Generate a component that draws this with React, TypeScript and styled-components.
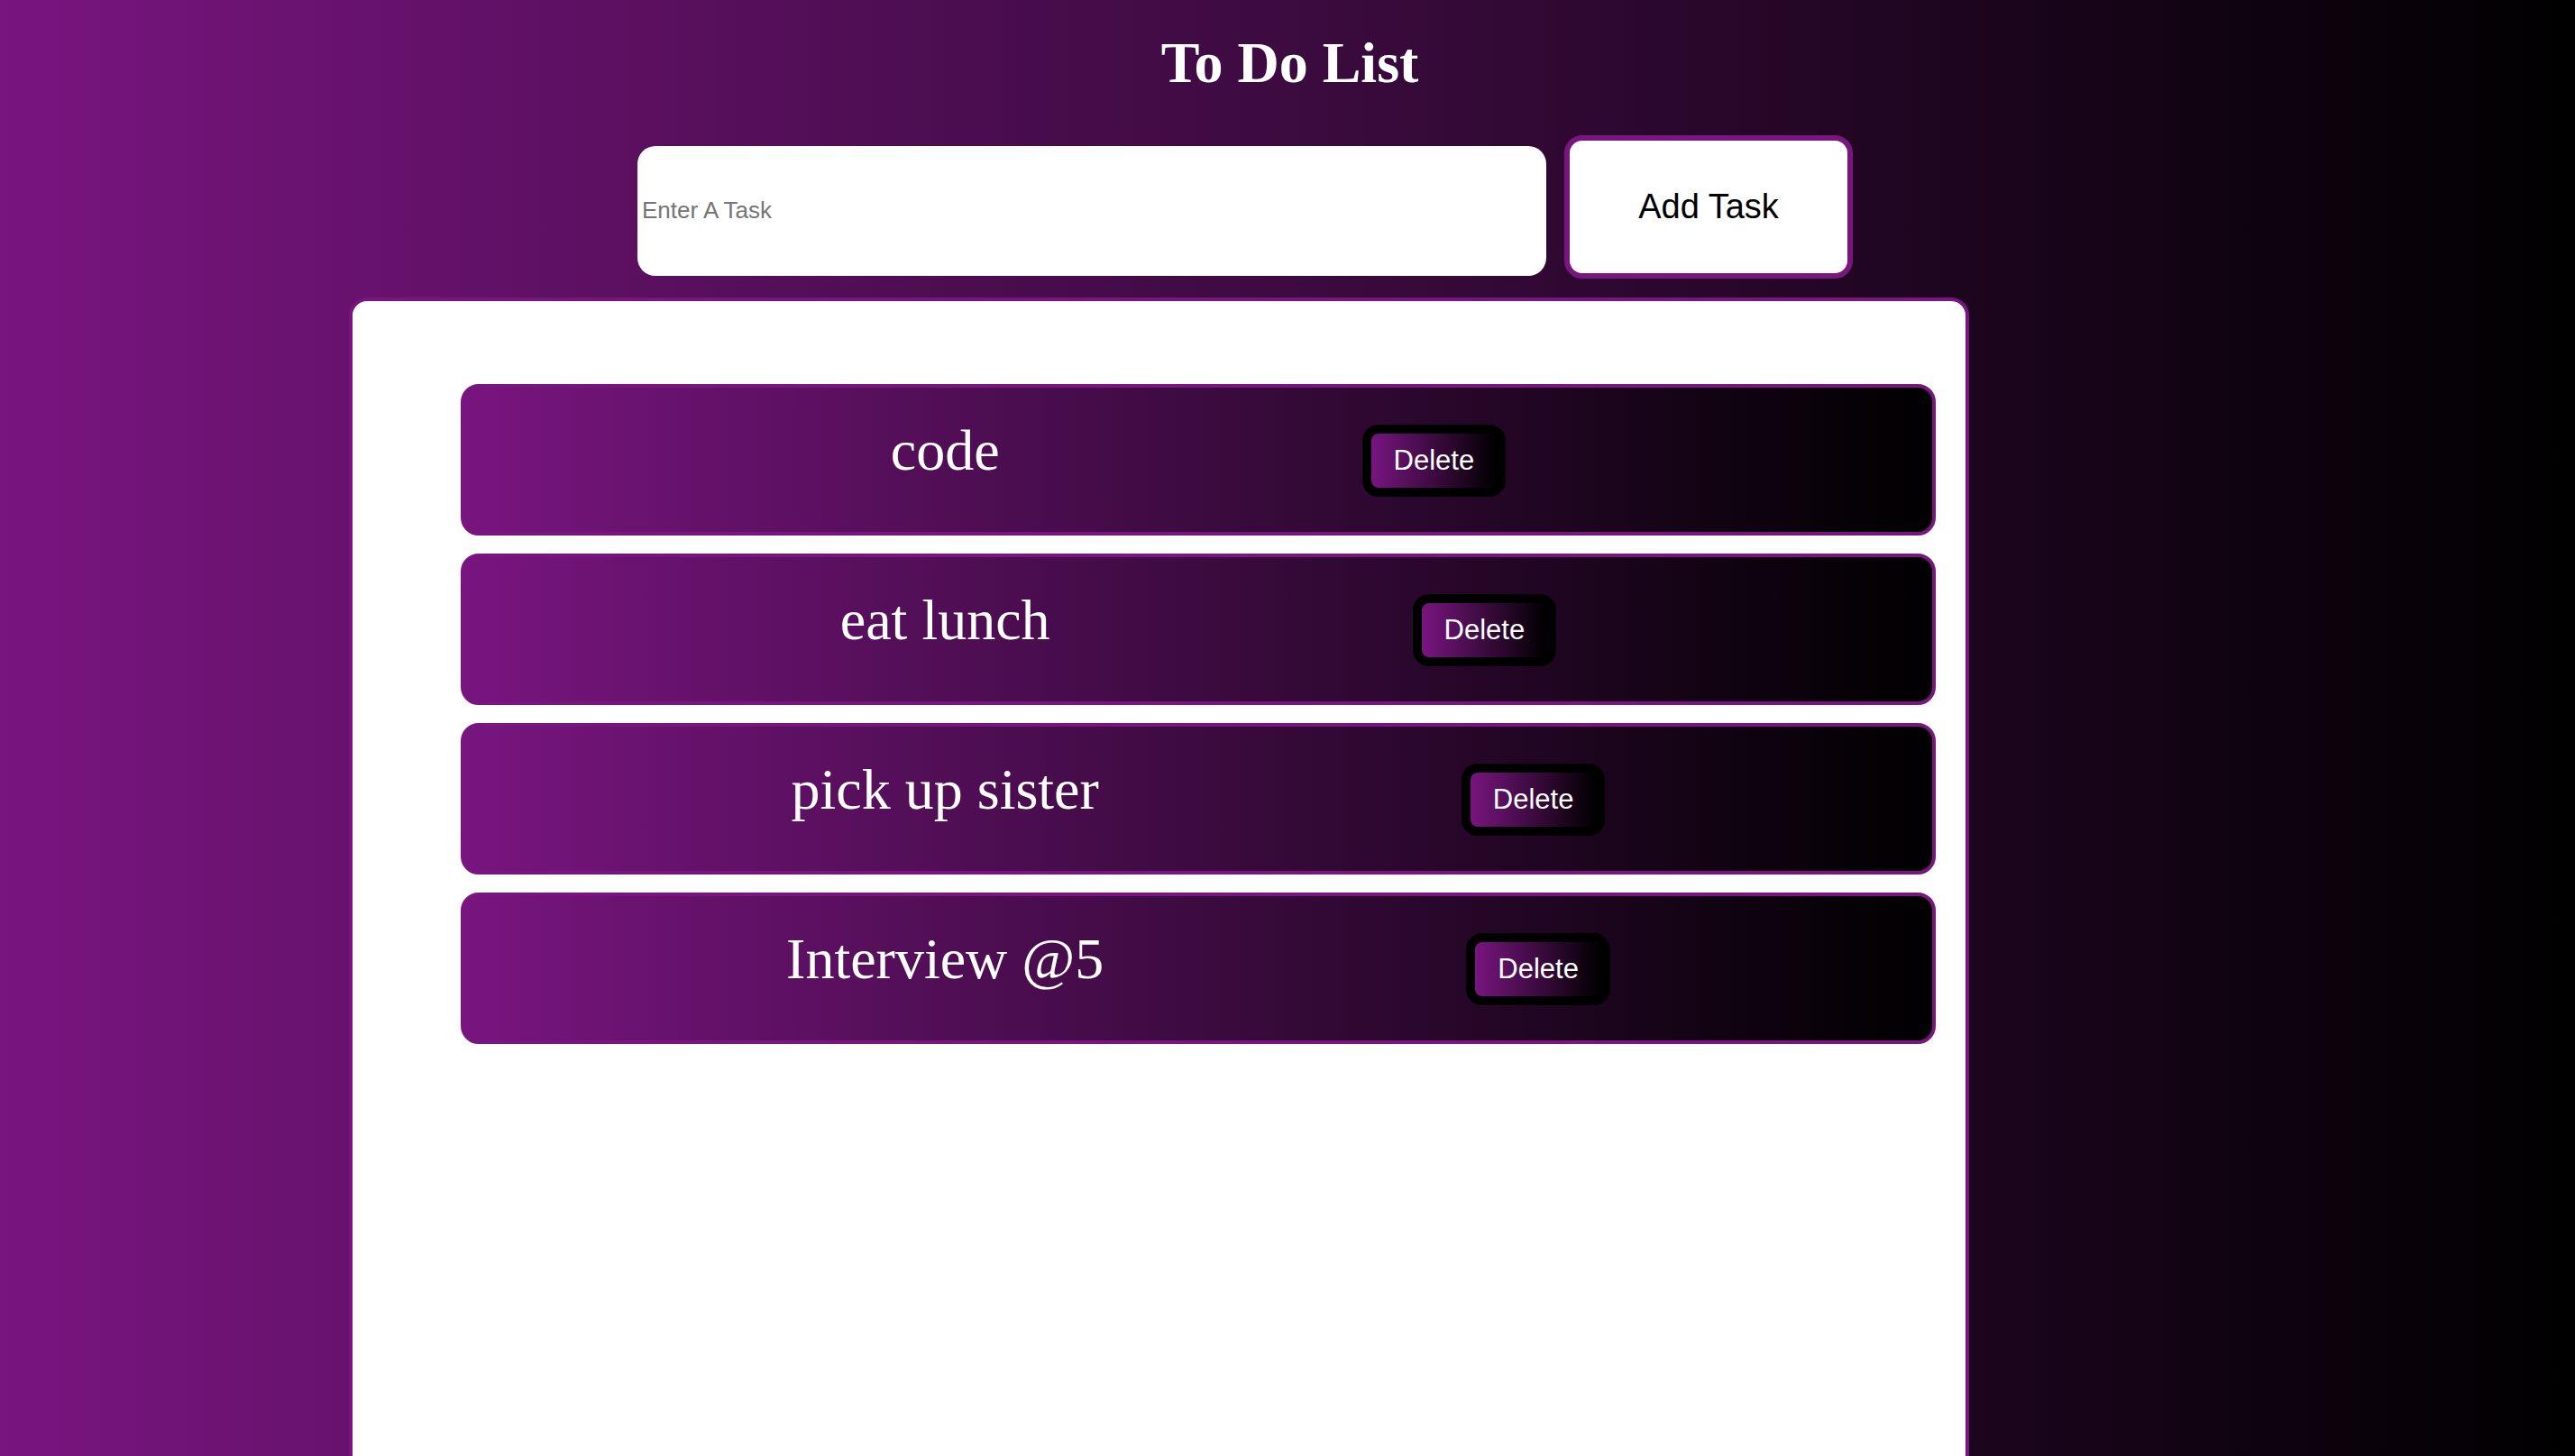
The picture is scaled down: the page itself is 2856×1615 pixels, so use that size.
import React, { useState } from "react";
import styled, { createGlobalStyle } from "styled-components";

const PURPLE = "#78157f";

const GlobalStyle = createGlobalStyle`
  html, body {
    margin: 0;
    padding: 0;
    height: 100%;
    overflow: hidden;
  }
  body {
    background: #000;
  }
  #root {
    height: 100%;
  }
`;

const Page = styled.div`
  height: 100vh;
  overflow: hidden;
  background: linear-gradient(to right, ${PURPLE}, #000);
  display: flex;
  flex-direction: column;
`;

const Title = styled.h1`
  margin: 33px 0 43px;
  padding-left: 5px;
  text-align: center;
  color: #fff;
  font-family: "Liberation Serif", "Times New Roman", serif;
  font-weight: bold;
  font-size: 64px;
  line-height: normal;
`;

const Form = styled.form`
  display: flex;
  align-items: baseline;
  justify-content: center;
  gap: 20px;
  padding-right: 94px;
`;

const TaskInput = styled.input`
  width: 1008px;
  height: 144px;
  box-sizing: border-box;
  border: none;
  border-radius: 20px;
  padding: 0 5px;
  font-family: "Liberation Sans", Arial, sans-serif;
  font-size: 26px;
  color: #000;
  caret-color: #000;
  background: #fff;
  outline: none;
  &::placeholder {
    color: #757575;
  }
`;

const AddButton = styled.button`
  width: 320px;
  height: 159px;
  box-sizing: border-box;
  border: 6px solid ${PURPLE};
  border-radius: 20px;
  background: #fff;
  color: #000;
  font-family: "Liberation Sans", Arial, sans-serif;
  font-size: 38px;
  padding: 0;
  cursor: pointer;
`;

const ListPanel = styled.div`
  margin: 21px 0 0 387px;
  width: 1797px;
  height: 1400px;
  flex-shrink: 0;
  box-sizing: border-box;
  background: #fff;
  border: 4px solid ${PURPLE};
  border-radius: 20px;
  padding: 92px 33px 0 120px;
`;

const TaskList = styled.ul`
  list-style: none;
  margin: 0;
  padding: 0;
  display: flex;
  flex-direction: column;
  gap: 20px;
`;

const TaskItem = styled.li`
  height: 168px;
  box-sizing: border-box;
  border: 4px solid ${PURPLE};
  border-radius: 20px;
  background: linear-gradient(to right, ${PURPLE}, #000);
  display: flex;
  justify-content: center;
  align-items: baseline;
  gap: 402px;
  padding-top: 33px;
`;

const TaskText = styled.span`
  font-family: "Liberation Serif", "Times New Roman", serif;
  font-size: 64px;
  color: #fff;
  line-height: normal;
`;

const DeleteButton = styled.button`
  height: 80px;
  box-sizing: border-box;
  border: 10px solid #000;
  border-radius: 18px;
  background: linear-gradient(to right, ${PURPLE}, #000);
  color: #fff;
  font-family: "Liberation Sans", Arial, sans-serif;
  font-size: 31px;
  line-height: normal;
  padding: 0 25px;
  cursor: pointer;
`;

export default function App() {
  const [tasks, setTasks] = useState<string[]>([
    "code",
    "eat lunch",
    "pick up sister",
    "Interview @5",
  ]);
  const [value, setValue] = useState("");

  const add = (e: React.FormEvent) => {
    e.preventDefault();
    if (!value.trim()) return;
    setTasks([...tasks, value.trim()]);
    setValue("");
  };

  return (
    <>
      <GlobalStyle />
      <Page>
        <Title>To Do List</Title>
        <Form onSubmit={add}>
          <TaskInput
            autoFocus
            placeholder="Enter A Task"
            value={value}
            onChange={(e) => setValue(e.target.value)}
          />
          <AddButton type="submit">Add Task</AddButton>
        </Form>
        <ListPanel>
          <TaskList>
            {tasks.map((t, i) => (
              <TaskItem key={i}>
                <TaskText>{t}</TaskText>
                <DeleteButton
                  type="button"
                  onClick={() => setTasks(tasks.filter((_, j) => j !== i))}
                >
                  Delete
                </DeleteButton>
              </TaskItem>
            ))}
          </TaskList>
        </ListPanel>
      </Page>
    </>
  );
}
